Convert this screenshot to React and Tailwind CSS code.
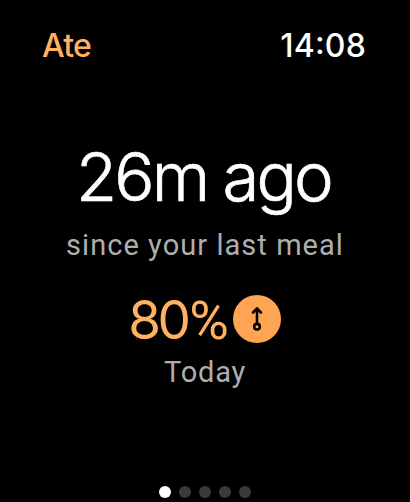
const pages = [0, 1, 2, 3, 4];

function ArrowBadge() {
  return (
    <svg viewBox="0 0 48 48" className="w-12 h-12 shrink-0">
      <circle cx="24" cy="24" r="24" fill="#ffa452" />
      <g fill="none" stroke="#000" strokeWidth="2.6" strokeLinecap="round" strokeLinejoin="round">
        <path d="M24 28.5V14M20 17.5l4-4 4 4" />
        <circle cx="24" cy="31.7" r="2.8" />
      </g>
    </svg>
  );
}

export default function App() {
  return (
    <div className="flex flex-col w-[410px] h-[502px] bg-black text-white font-['Inter',sans-serif] whitespace-nowrap overflow-hidden">
      <header className="flex justify-between pl-[42px] pr-[44px] pt-[26px] text-[32px] leading-10 font-medium">
        <span className="text-[#ffb060] tracking-[-0.8px]">Ate</span>
        <span className="[font-feature-settings:'case'] tracking-[0.2px]">14:08</span>
      </header>

      <main className="flex flex-col items-center pt-[71px]">
        <h1 className="pr-[3px] text-[67px] leading-20 font-light [-webkit-text-stroke:0.7px_white] tracking-[-2.8px] [word-spacing:-1px]">26m ago</h1>
        <p className="mt-[12px] font-['Roboto',sans-serif] text-[29px] leading-8 tracking-[1.05px] text-[#aeaeae]">since your last meal</p>
        <div className="flex items-center mt-[34px] h-12 pr-px">
          <span className="text-[53px] leading-[52px] pt-0.5 tracking-[-3.6px] mr-1 text-[#ffb060]">
            80<span className="font-['Roboto',sans-serif] text-[54px] tracking-normal ml-[2px]">%</span>
          </span>
          <ArrowBadge />
        </div>
        <p className="mt-[13px] font-['Roboto',sans-serif] text-[29px] leading-8 tracking-[0.8px] text-[#aeaeae]">Today</p>
      </main>

      <footer className="flex justify-center gap-2 mt-auto pb-1">
        {pages.map((page) => (
          <span
            key={page}
            className={`w-3 h-3 rounded-full ${page === 0 ? 'bg-white' : 'bg-[#3a3a3a]'}`}
          />
        ))}
      </footer>
    </div>
  );
}
